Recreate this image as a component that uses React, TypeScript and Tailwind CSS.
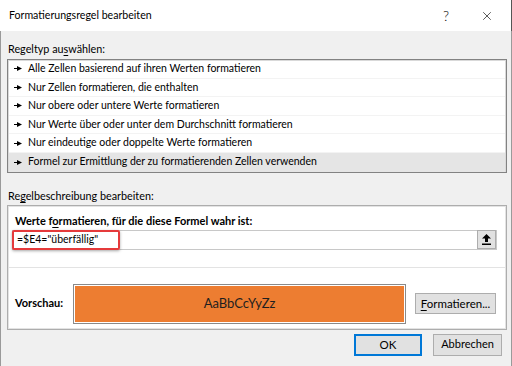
import { X } from 'lucide-react'

const ruleTypes = [
  'Alle Zellen basierend auf ihren Werten formatieren',
  'Nur Zellen formatieren, die enthalten',
  'Nur obere oder untere Werte formatieren',
  'Nur Werte über oder unter dem Durchschnitt formatieren',
  'Nur eindeutige oder doppelte Werte formatieren',
  'Formel zur Ermittlung der zu formatierenden Zellen verwenden',
]

const Bullet = () => (
  <svg width="8" height="5" viewBox="0 0 8 5" className="shrink-0">
    <path d="M0 2.5H4" stroke="#000" strokeWidth="1" />
    <path d="M3 0L8 2.5L3 5Z" fill="#000" />
  </svg>
)

const App = () => {
  return (
    <div
      className="w-[512px] h-[366px] bg-[#f0f0f0] flex flex-col text-[11px] text-black shadow-[inset_1px_0_0_#9a9a9a,inset_-1px_0_0_#9a9a9a] overflow-hidden"
      style={{ fontFamily: 'Lato, "Noto Sans", sans-serif' }}
    >
      {/* title bar */}
      <div className="h-[31px] bg-white flex items-center pl-[9px] pr-[18px] shadow-[inset_-1px_0_0_#555]">
        <span className="text-[10.6px] leading-none">Formatierungsregel bearbeiten</span>
        <span className="ml-auto mr-[31px] text-[14px] font-light leading-none">?</span>
        <X size={14} strokeWidth={1.1} />
      </div>

      <div className="flex flex-col pl-[7px] pr-[5px]">
        <div className="mt-[11px] h-[14px] leading-[14px] pl-[1px] text-[10.8px]">
          Regeltyp au<span className="underline underline-offset-2">s</span>wählen:
        </div>

        {/* rule type list */}
        <div className="mt-[3px] border border-[#828282] shadow-[inset_0_0_0_1px_#d9d9d9] bg-white px-[1px]">
          {ruleTypes.map((t, i) => (
            <div
              key={t}
              className={
                'h-[18.6px] flex items-center gap-[6px] pl-[5px] text-[10.5px] ' +
                (i === ruleTypes.length - 1 ? 'bg-[#e5e5e5]' : 'border-b border-[#f3f3f3]')
              }
            >
              <Bullet />
              <span className="whitespace-nowrap">{t}</span>
            </div>
          ))}
        </div>

        <div className="mt-[16px] h-[14px] leading-[14px] pl-[1px] text-[10.8px]">
          Re<span className="underline underline-offset-2">g</span>elbeschreibung bearbeiten:
        </div>

        {/* rule description */}
        <div className="mt-[2px] border border-[#adadad] shadow-[inset_0_0_0_1px_#e3e3e3] bg-white flex flex-col">
          <div className="mt-[8px] pl-[7px] h-[14px] leading-[14px] font-bold text-[11px]">
            Werte f<span className="underline underline-offset-2">o</span>rmatieren, für die diese Formel wahr ist:
          </div>
          <div className="relative mt-[2px] ml-[4px] mr-[9px] h-[20px] border border-[#c8c8c8] flex items-center">
            <span className="pl-[4px] text-[10.5px] whitespace-nowrap">=$E4="überfällig"</span>
            <div className="ml-auto h-[19px] w-[19px] bg-[#e1e1e1] border border-[#adadad] flex items-center justify-center">
              <svg width="9" height="11" viewBox="0 0 9 11">
                <path d="M4.5 0L9 4.5H6V8H3V4.5H0Z" fill="#000" />
                <rect x="0" y="9.5" width="9" height="1.5" fill="#000" />
              </svg>
            </div>
            <div className="absolute left-[-1px] top-[-1px] w-[108px] h-[20px] border-2 border-[#e53a3b] rounded-[2px] shadow-[0_1px_3px_rgba(0,0,0,0.35)]" />
          </div>

          <div className="mt-[17px] h-px bg-[#e3e3e3]" />

          <div className="flex items-center mt-[16px] mb-[5px]">
            <span className="pl-[7px] w-[65px] font-bold text-[11px]">Vorschau:</span>
            <div className="w-[333px] h-[40px] border border-[#8a8a8a] p-[1px] bg-white">
              <div className="h-full bg-[#ed7d31] flex items-center justify-center text-[13px] text-[#1f1f1f]">
                AaBbCcYyZz
              </div>
            </div>
            <div className="ml-[9px] w-[81px] h-[21px] bg-[#e1e1e1] border border-[#adadad] flex items-center justify-center text-[11.5px]">
              <span>
                <span className="underline underline-offset-2">F</span>ormatieren...
              </span>
            </div>
          </div>
        </div>

        {/* dialog buttons */}
        <div className="flex justify-end gap-[11px] mt-[4px] pr-[5px]">
          <div className="w-[68px] h-[22px] bg-[#e1e1e1] border-2 border-[#0078d7] flex items-center justify-center text-[11.5px]">
            OK
          </div>
          <div className="w-[69px] h-[22px] bg-[#e1e1e1] border border-[#adadad] flex items-center justify-center text-[11px]">
            Abbrechen
          </div>
        </div>
      </div>
    </div>
  )
}

export default App
